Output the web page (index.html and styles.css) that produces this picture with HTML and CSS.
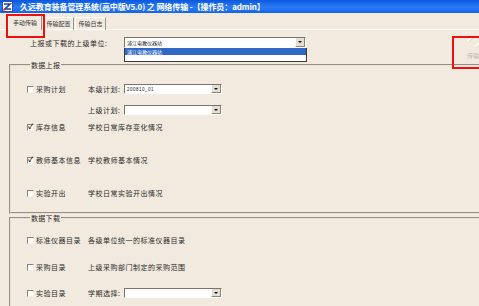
FILE: index.html
```html
<!DOCTYPE html>
<html lang="zh-CN">
<head>
  <meta charset="UTF-8">
  <title>网络传输</title>
  <link rel="stylesheet" href="styles.css">
</head>
<body>
  <div class="window">
    <div class="titlebar">
      <svg class="app-icon" width="11" height="11" viewBox="0 0 11 11">
        <rect x="0.5" y="0.5" width="10" height="10" fill="#fff" stroke="#2a4fb0"/>
        <path d="M2 3 L8 3 L3 8 L9 8" fill="none" stroke="#1d3fa8" stroke-width="1.6"/>
        <path d="M1.5 9.5 L4 7" stroke="#d22" stroke-width="1.4"/>
      </svg>
      <span class="title">久远教育装备管理系统(高中版V5.0) 之 网络传输 -【操作员：admin】</span>
    </div>

    <div class="tabs">
      <div class="tab tab-active">手动传输</div>
      <div class="tab">传输配置</div>
      <div class="tab">传输日志</div>
    </div>

    <div class="page">
      <div class="top">
        <span class="top-label">上报或下载的上级单位:</span>
        <div class="combo combo-wide">
          <span class="combo-value">浦江电教仪器站</span>
          <span class="combo-btn"></span>
          <div class="combo-list">
            <div class="combo-item selected">浦江电教仪器站</div>
          </div>
        </div>
        <div class="send-btn">
          <svg width="14" height="12" viewBox="0 0 14 12">
            <path d="M1 5 L5 1 M8 11 L13 6" stroke="#fff" stroke-width="1.2"/>
            <path d="M2 6 L6 2 M9 12 L14 7" stroke="#d9d1c2" stroke-width="0.8"/>
          </svg>
          <span>传输</span>
        </div>
      </div>

      <fieldset class="group group-up">
        <legend>数据上报</legend>
        <div class="row gap-14">
          <span class="cb"></span><span class="name">采购计划</span>
          <span class="field-label">本级计划:</span>
          <div class="combo combo-small"><span class="combo-value num">200810_01</span><span class="combo-btn"></span></div>
        </div>
        <div class="row row-indent gap-9">
          <span class="field-label">上级计划:</span>
          <div class="combo combo-small"><span class="combo-value"></span><span class="combo-btn"></span></div>
        </div>
        <div class="row gap-5">
          <span class="cb checked"></span><span class="name">库存信息</span>
          <span class="desc">学校日常库存变化情况</span>
        </div>
        <div class="row gap-21">
          <span class="cb checked"></span><span class="name">教师基本信息</span>
          <span class="desc">学校教师基本情况</span>
        </div>
        <div class="row gap-21">
          <span class="cb"></span><span class="name">实验开出</span>
          <span class="desc">学校日常实验开出情况</span>
        </div>
      </fieldset>

      <fieldset class="group group-down">
        <legend>数据下载</legend>
        <div class="row gap-12">
          <span class="cb"></span><span class="name">标准仪器目录</span>
          <span class="desc">各级单位统一的标准仪器目录</span>
        </div>
        <div class="row gap-15">
          <span class="cb"></span><span class="name">采购目录</span>
          <span class="desc">上级采购部门制定的采购范围</span>
        </div>
        <div class="row gap-14">
          <span class="cb"></span><span class="name">实验目录</span>
          <span class="field-label">学期选择:</span>
          <div class="combo combo-small"><span class="combo-value"></span><span class="combo-btn"></span></div>
        </div>
      </fieldset>
    </div>

    <div class="mark mark-tab"></div>
    <div class="mark mark-send"></div>
  </div>
</body>
</html>
```

FILE: styles.css
```css
body {
  margin: 0;
  background-color: #f2eadf;
  font-family: "Noto Sans CJK SC", "DejaVu Sans", sans-serif;
  color: #2a2a2a;
  overflow: hidden;
}

.window {
  position: relative;
  width: 479px;
  height: 306px;
  overflow: hidden;
}

/* title bar */
.titlebar {
  height: 13px;
  display: flex;
  align-items: center;
  padding-left: 2px;
  gap: 7px;
  background: linear-gradient(to bottom, #0a58dc, #2a7bf6 55%, #1563e8);
}

.title {
  color: #fff;
  font-size: 8px;
  font-weight: bold;
  line-height: 13px;
  white-space: nowrap;
  letter-spacing: -0.1px;
}

/* tabs */
.tabs {
  height: 17px;
  box-sizing: border-box;
  display: flex;
  align-items: flex-end;
  padding-left: 8px;
  border-bottom: 1px solid #fff;
}

.tab {
  height: 13px;
  width: 31px;
  box-sizing: border-box;
  border-top: 1px solid #fff;
  border-left: 1px solid #fff;
  border-right: 1px solid #9c9484;
  font-size: 6px;
  line-height: 11px;
  text-align: center;
  color: #333;
  margin-bottom: -1px;
  margin-right: 1px;
}

.tab-active {
  height: 15px;
  width: 34px;
  background-color: #f2eadf;
  line-height: 13px;
}

/* top section */
.top {
  height: 31px;
  display: flex;
  align-items: flex-start;
  padding-left: 30px;
}

.top-label {
  width: 94px;
  margin-top: 8px;
  font-size: 7px;
  line-height: 10px;
  letter-spacing: 0.5px;
}

.combo {
  position: relative;
  display: flex;
  background-color: #fff;
  border-top: 1px solid #7a7468;
  border-left: 1px solid #7a7468;
  border-bottom: 1px solid #fff;
  border-right: 1px solid #fff;
  box-sizing: border-box;
}

.combo-value {
  flex: 1;
  font-size: 5px;
  line-height: 9px;
  padding-left: 2px;
  color: #222;
  white-space: nowrap;
}

.combo-value.num {
  font-family: "Liberation Sans", sans-serif;
  font-size: 4.5px;
}

.combo-btn {
  width: 8px;
  background-color: #e4ded2;
  border-left: 1px solid #fff;
  border-right: 1px solid #8c8679;
  border-bottom: 1px solid #8c8679;
  display: flex;
  align-items: center;
  justify-content: center;
}

.combo-btn::after {
  content: "";
  border-left: 2px solid transparent;
  border-right: 2px solid transparent;
  border-top: 2px solid #111;
}

.combo-wide {
  width: 182px;
  height: 11px;
  margin-top: 7px;
}

.combo-small {
  width: 98px;
  height: 10px;
}

.combo-list {
  position: absolute;
  left: -1px;
  top: 10px;
  width: 183px;
  height: 14px;
  background-color: #fff;
  border: 1px solid #3a3a3a;
  border-top: none;
  box-sizing: border-box;
}

.combo-item {
  height: 7px;
  font-size: 5px;
  line-height: 7px;
  padding-left: 2px;
}

.combo-item.selected {
  background-color: #316ac5;
  color: #fff;
}

.send-btn {
  margin-left: auto;
  margin-top: 6px;
  width: 14px;
  display: flex;
  flex-direction: column;
  align-items: flex-end;
  gap: 4px;
}

.send-btn svg {
  margin-right: -2px;
}

.send-btn span {
  font-size: 6px;
  line-height: 8px;
  color: #bdb5a6;
  white-space: nowrap;
}

/* group boxes */
.group {
  margin: 0 0 0 9px;
  padding: 0 0 13px 16px;
  border: 2px groove #e8e1d4;
  border-right: none;
  min-width: 0;
}

.group legend {
  font-size: 7px;
  line-height: 8px;
  padding: 0 1px;
  margin-left: 3px;
  letter-spacing: 0.3px;
}

.group-down {
  padding-bottom: 40px;
}

.row {
  display: flex;
  align-items: center;
  height: 12px;
  font-size: 7px;
  letter-spacing: 0.5px;
  white-space: nowrap;
}

.row-indent {
  padding-left: 61px;
}

.gap-5 { margin-top: 5px; }
.gap-9 { margin-top: 9px; }
.gap-12 { margin-top: 12px; }
.gap-14 { margin-top: 14px; }
.gap-15 { margin-top: 15px; }
.gap-21 { margin-top: 21px; }

.cb {
  width: 7px;
  height: 7px;
  box-sizing: border-box;
  background-color: #fff;
  border-top: 1px solid #8a8478;
  border-left: 1px solid #8a8478;
  border-right: 1px solid #f4f0e8;
  border-bottom: 1px solid #f4f0e8;
  margin-right: 2px;
  position: relative;
}

.cb.checked::after {
  content: "✓";
  position: absolute;
  left: 0;
  top: -3px;
  font-size: 7px;
  line-height: 9px;
  color: #111;
  font-weight: bold;
}

.name {
  width: 52px;
}

.field-label {
  width: 36px;
}

/* red highlight marks */
.mark {
  position: absolute;
  border: 2px solid #ee1010;
  box-sizing: border-box;
}

.mark-tab {
  left: 6px;
  top: 14px;
  width: 39px;
  height: 24px;
}

.mark-send {
  left: 452px;
  top: 36px;
  width: 40px;
  height: 33px;
}
```
